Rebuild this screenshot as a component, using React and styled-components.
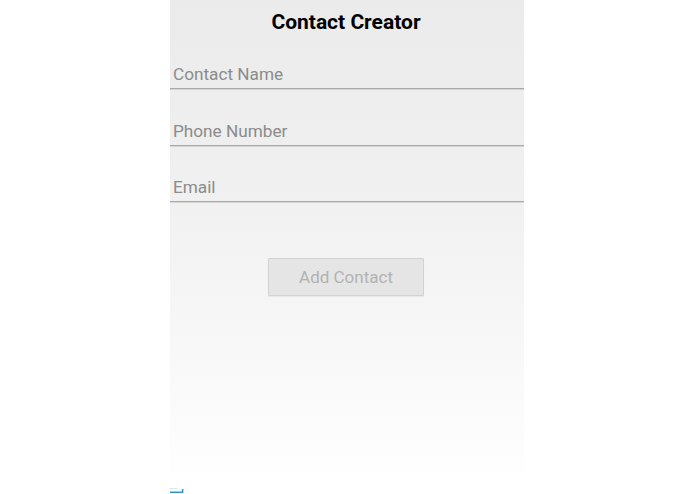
import React from 'react';
import styled, { createGlobalStyle } from 'styled-components';

const GlobalStyle = createGlobalStyle`
  html, body {
    margin: 0;
    padding: 0;
    background: #ffffff;
  }
  body {
    font-family: Roboto, "Liberation Sans", Arial, sans-serif;
  }
`;

const Page = styled.div`
  width: 695px;
  height: 494px;
  display: flex;
  flex-direction: column;
  align-items: flex-start;
  overflow: hidden;
`;

const Screen = styled.div`
  margin-left: 170px;
  width: 354px;
  height: 472px;
  display: flex;
  flex-direction: column;
  background: linear-gradient(180deg, #ebebeb 0%, #f0f0f0 40%, #f8f8f8 75%, #fefefe 100%);
`;

const Title = styled.h1`
  margin: 0 0 0 -2px;
  padding-top: 11.5px;
  height: 21px;
  line-height: 21px;
  font-size: 21px;
  font-weight: 700;
  color: #000000;
  text-align: center;
`;

const Field = styled.input`
  display: block;
  box-sizing: content-box;
  width: 348px;
  height: 20px;
  line-height: 20px;
  margin: 0;
  padding: 31.5px 3px 4px 3px;
  border: none;
  border-bottom: 1px solid #a9a9a9;
  box-shadow: 0 1px 0 rgba(170, 170, 170, 0.35);
  background: transparent;
  font-family: Roboto, "Liberation Sans", Arial, sans-serif;
  font-size: 17.2px;
  color: #333;
  outline: none;

  &::placeholder {
    color: #8b8b8b;
  }
`;

const Actions = styled.div`
  display: flex;
  justify-content: center;
  padding-top: 56px;
  padding-right: 2px;
`;

const AddButton = styled.button`
  width: 156px;
  height: 38px;
  box-sizing: border-box;
  background: #e5e5e5;
  border: 1px solid #d2d2d2;
  border-radius: 1px;
  box-shadow: 0 1px 1px rgba(0, 0, 0, 0.06);
  font-family: Roboto, "Liberation Sans", Arial, sans-serif;
  font-size: 17px;
  color: #b2b2b2;
  padding: 0;
  cursor: default;
`;

const Marker = styled.svg`
  display: block;
  margin-left: 169px;
  margin-top: 14px;
`;

export default function App() {
  return (
    <Page>
      <GlobalStyle />
      <Screen>
        <Title>Contact Creator</Title>
        <Field placeholder="Contact Name" />
        <Field placeholder="Phone Number" />
        <Field placeholder="Email" />
        <Actions>
          <AddButton disabled>Add Contact</AddButton>
        </Actions>
      </Screen>
      <Marker width="16" height="8" viewBox="0 0 16 8">
        <path d="M1 6.2 H13.6 V3" fill="none" stroke="#2e9bd0" strokeWidth="1.6" />
        <path d="M1 2.5 H8" fill="none" stroke="#cfe8f4" strokeWidth="1" />
      </Marker>
    </Page>
  );
}
